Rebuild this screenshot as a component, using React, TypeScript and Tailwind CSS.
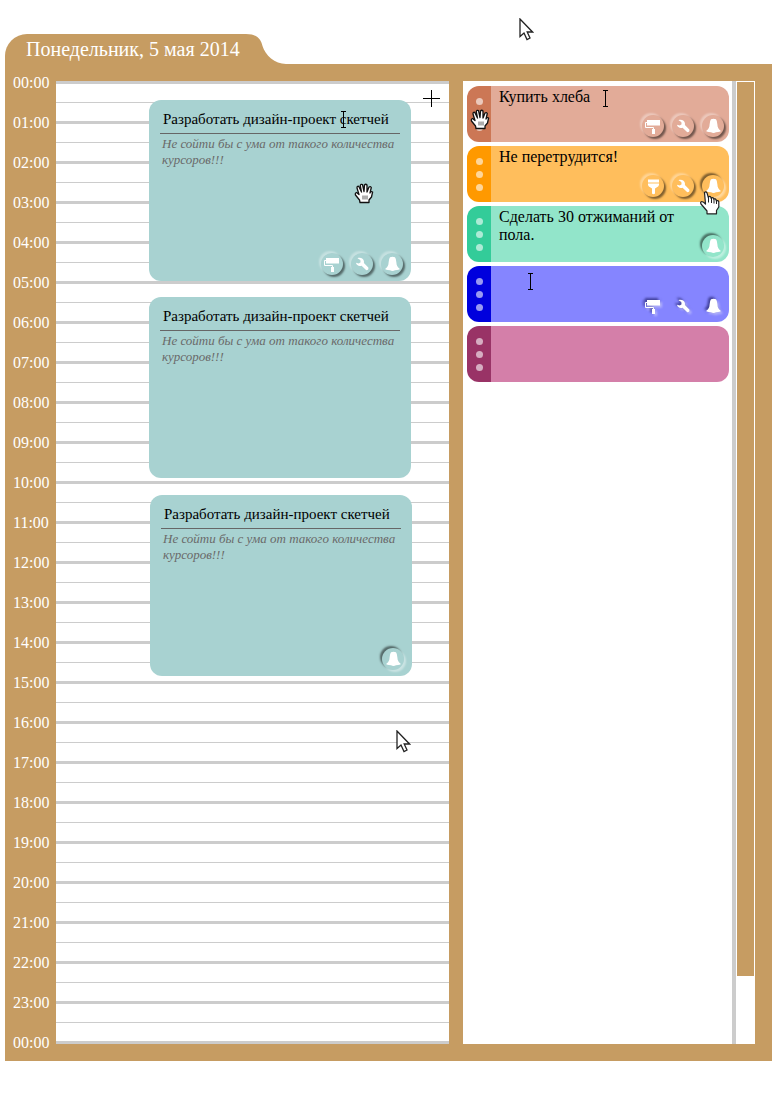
import React from "react";

type IconName = "roller" | "brush" | "wrench" | "bell";
type IconState = "raised" | "pressed" | "engraved";
type CardIcon = { name: IconName; label: string; state: IconState };

const HOURS = Array.from({ length: 25 }, (_, i) => `${String(i % 24).padStart(2, "0")}:00`);

const icon = (name: IconName, state: IconState = "raised"): CardIcon => ({
  name,
  state,
  label: { roller: "Цвет", brush: "Цвет", wrench: "Настройки", bell: "Напоминание" }[name],
});

function Glyph({ name }: { name: IconName }) {
  if (name === "roller")
    return (
      <svg viewBox="0 0 20 20" className="size-5 shrink-0" fill="#fff" aria-hidden="true">
        <rect x="4" y="4" width="13" height="5.500" />
        <path d="M4 6.500H2.500V11.500H10.500V14" fill="none" stroke="#fff" strokeWidth="1" />
        <rect x="9" y="13" width="3" height="5" />
      </svg>
    );
  if (name === "brush")
    return (
      <svg viewBox="0 0 20 20" className="size-5 shrink-0" fill="#fff" aria-hidden="true">
        <rect x="5" y="3.500" width="11" height="3" />
        <path d="M5 7.500H16V9Q15.500 10.500 13.500 11.500L12 12.500V17.500Q10.500 18.800 9 17.500V12.500L7.500 11.500Q5.500 10.500 5 9Z" />
      </svg>
    );
  if (name === "wrench")
    return (
      <svg viewBox="0 0 20 20" className="size-5 shrink-0" fill="#fff" aria-hidden="true">
        <path d="M5.500 4.200C8.500 3 11.800 4.800 12 7.800L11.900 9L16.300 13.600Q17 16.200 14.300 16.200L9.600 11.700C7 12.500 4.500 11.500 4 8.800L6.800 9.400L8.600 8.300L8.300 6.100Z" />
      </svg>
    );
  return (
    <svg viewBox="0 0 20 20" className="size-5 shrink-0" fill="#fff" aria-hidden="true">
      <path d="M8 3.300Q10.500 2 13 3.300Q14.300 5 14.400 8.500Q14.500 12.500 17.500 14.500V15.500Q15 16.300 13 16.300Q10.500 17.800 8 16.300Q5.500 16.300 3.500 15.500V14.500Q6.500 12.500 6.600 8.500Q6.700 5 8 3.300Z" />
    </svg>
  );
}

const ICON_STYLE: Record<IconState, string> = {
  raised: "shadow-[2px_2px_2px_rgba(0,0,0,0.5),-2px_-2px_2px_rgba(255,255,255,0.35)]",
  pressed: "shadow-[-2px_-2px_2px_rgba(0,0,0,0.5),2px_2px_2px_rgba(255,255,255,0.4)]",
  engraved:
    "[filter:drop-shadow(2px_2px_1px_rgba(255,255,255,0.4))_drop-shadow(-2px_-2px_1px_rgba(0,0,60,0.5))]",
};

function IconRow({ icons }: { icons: CardIcon[] }) {
  return (
    <div className="flex justify-end gap-2">
      {icons.map((it) => (
        <button
          key={it.name}
          type="button"
          aria-label={it.label}
          aria-pressed={it.state === "pressed"}
          className={`flex size-[22px] items-center justify-center rounded-full ${ICON_STYLE[it.state]}`}
        >
          <Glyph name={it.name} />
        </button>
      ))}
    </div>
  );
}

const EVENTS: { place: string; icons: CardIcon[] }[] = [
  { place: "top-[19px] left-[93px]", icons: [icon("roller"), icon("wrench"), icon("bell")] },
  { place: "top-[216px] left-[93px]", icons: [] },
  { place: "top-[414px] left-[94px]", icons: [icon("bell", "pressed")] },
];

const TASKS: { text: string; strip: string; body: string; icons: CardIcon[] }[] = [
  {
    text: "Купить хлеба",
    strip: "bg-[#cc7755]",
    body: "bg-[#e2ab98]",
    icons: [icon("roller"), icon("wrench"), icon("bell")],
  },
  {
    text: "Не перетрудится!",
    strip: "bg-[#ff9900]",
    body: "bg-[#ffbe5c]",
    icons: [icon("brush"), icon("wrench"), icon("bell", "pressed")],
  },
  {
    text: "Сделать 30 отжиманий от пола.",
    strip: "bg-[#33cc99]",
    body: "bg-[#92e5ca]",
    icons: [icon("bell", "pressed")],
  },
  {
    text: "",
    strip: "bg-[#0000dd]",
    body: "bg-[#8585ff]",
    icons: [icon("roller", "engraved"), icon("wrench", "engraved"), icon("bell", "engraved")],
  },
  { text: "", strip: "bg-[#993366]", body: "bg-[#d47fa9]", icons: [] },
];

function Arrow({ className }: { className: string }) {
  return (
    <svg viewBox="0 0 15 23" className={`absolute h-[23px] w-[15px] ${className}`} aria-hidden="true">
      <path
        d="M1 1V18.500L5 15L8 21.500L11 20L8.200 14H13.500Z"
        fill="#fff"
        stroke="#222"
        strokeWidth="1.3"
      />
    </svg>
  );
}

function Beam({ className }: { className: string }) {
  return (
    <svg viewBox="0 0 5 17" className={`absolute h-[17px] w-[5px] ${className}`} aria-hidden="true">
      <path d="M0 .5H5M2.500 0V17M0 16.500H5" stroke="#000" fill="none" />
    </svg>
  );
}

function Hand({ className }: { className: string }) {
  return (
    <svg viewBox="0 0 20 21" className={`absolute h-[21px] w-5 ${className}`} aria-hidden="true">
      <path
        d="M6 19.500L5.500 17L1.500 12Q.8 10 2.500 9.500L5 11.500L3 5Q3 3 4.700 3.300L7.500 9L6.300 2.500Q7 .8 8.500 1.500L10 8.500L10.500 2Q11.700 .5 13 2L13 9L15 4Q16.500 3 17.300 4.500L16 10Q17 8 18.600 9L17.500 14L15 17V19.500Z"
        fill="#fff"
        stroke="#111"
        strokeWidth="1.3"
        strokeLinejoin="round"
      />
      <path d="M9 12.500V16.500M11 12.500V16.500M13 12.500V16.500" stroke="#333" strokeWidth=".8" />
    </svg>
  );
}

function Pointer({ className }: { className: string }) {
  return (
    <svg viewBox="0 0 20 24" className={`absolute h-6 w-5 ${className}`} aria-hidden="true">
      <path
        d="M4.500 1.500Q5.800 .2 7 1.800L8.500 7V5.800Q10 4.800 11 6.300V7.200Q12.500 6 13.800 7.500V8.300Q15 7.300 16.200 8.800V9.800Q18 9 18.800 10.800V16L16.500 19.500V22.800H7V20L1 13Q0 10.800 1.800 10.500Q3.500 10.800 5.500 13Z"
        fill="#fff"
        stroke="#222"
        strokeWidth="1.2"
        strokeLinejoin="round"
      />
      <path d="M8.500 7V11.500M11.500 7V12M14 8.500V12.500M16.500 10V13" stroke="#222" fill="none" />
    </svg>
  );
}

export default function App() {
  return (
    <div className="relative bg-white pt-[34px] pr-1 pb-[39px] pl-[5px] font-['Liberation_Serif',serif] text-base text-black">
      <header className="flex h-[30px] text-[#c69c62]">
        <h1 className="rounded-tl-[22px] bg-[#c69c62] pr-1 pl-[21px] text-xl leading-[30px] text-white">
          Понедельник, 5 мая 2014
        </h1>
        <svg viewBox="0 0 43 30" className="-ml-px h-[30px] w-[43px]" fill="currentColor" aria-hidden="true">
          <path d="M0 0H3C14 0 18 5 19.500 12C22 21 32 30 43 30H0Z" />
        </svg>
      </header>

      <div className="flex bg-[#c69c62] pt-[17px] pr-[17px] pb-[17px]">
        <ol className="-mt-[18px] -mb-5 w-[51px] shrink-0 pl-2 text-white">
          {HOURS.map((hour, i) => (
            <li key={i} className="h-10 leading-10">
              {hour}
            </li>
          ))}
        </ol>

        <main className="relative min-w-0 flex-1 bg-white">
          {HOURS.map((_, i) => (
            <div key={i}>
              <div className="h-[3px] bg-[#ccc]" />
              {i < 24 && <div className="my-[18px] h-px bg-[#ccc]" />}
            </div>
          ))}

          {EVENTS.map((event, i) => (
            <article
              key={i}
              className={`absolute flex h-[181px] w-[262px] flex-col justify-between rounded-xl bg-[#a8d2d1] px-2 pt-2.5 pb-1.5 ${event.place}`}
            >
              <div className="px-[3px]">
                <h2 className="border-b border-[#666] px-[3px] pb-1 text-[15px] leading-[19px] whitespace-nowrap">
                  Разработать дизайн-проект скетчей
                </h2>
                <p className="px-0.5 pt-0.5 text-[13px] leading-4 text-[#6a6a6a] italic">
                  Не сойти бы с ума от такого количества курсоров!!!
                </p>
              </div>
              <IconRow icons={event.icons} />
            </article>
          ))}
        </main>

        <aside className="ml-[14px] flex w-[292px] shrink-0 bg-white">
          <ul className="flex flex-1 flex-col gap-1 pt-[5px] pr-[3px] pl-1">
            {TASKS.map((task, i) => (
              <li key={i} className="flex h-14 overflow-hidden rounded-xl">
                <span className={`flex w-6 shrink-0 flex-col items-center justify-center gap-1.5 ${task.strip}`}>
                  <i className="size-[7px] rounded-full bg-white/60" />
                  <i className="size-[7px] rounded-full bg-white/60" />
                  <i className="size-[7px] rounded-full bg-white/60" />
                </span>
                <div className={`relative flex-1 px-2 pt-0.5 ${task.body}`}>
                  <p className="max-w-[180px] leading-[18px]">{task.text}</p>
                  <div className="absolute right-[5px] bottom-[5px]">
                    <IconRow icons={task.icons} />
                  </div>
                </div>
              </li>
            ))}
          </ul>
          <div className="w-1 bg-[#ccc]" />
          <div className="w-[19px] p-px">
            <div className="h-[93%] bg-[#c69c62]" />
          </div>
        </aside>
      </div>

      <Arrow className="top-[18px] left-[519px]" />
      <Arrow className="top-[730px] left-[396px]" />
      <svg viewBox="0 0 17 17" className="absolute top-[90px] left-[423px] size-[17px]" aria-hidden="true">
        <path d="M8.500 0V17M0 8.500H17" stroke="#000" />
      </svg>
      <Beam className="top-[111px] left-[341px]" />
      <Beam className="top-[90px] left-[603px]" />
      <Beam className="top-[273px] left-[528px]" />
      <Hand className="top-[183px] left-[354px]" />
      <Hand className="top-[109px] left-[470px]" />
      <Pointer className="top-[191px] left-[700px]" />
    </div>
  );
}
